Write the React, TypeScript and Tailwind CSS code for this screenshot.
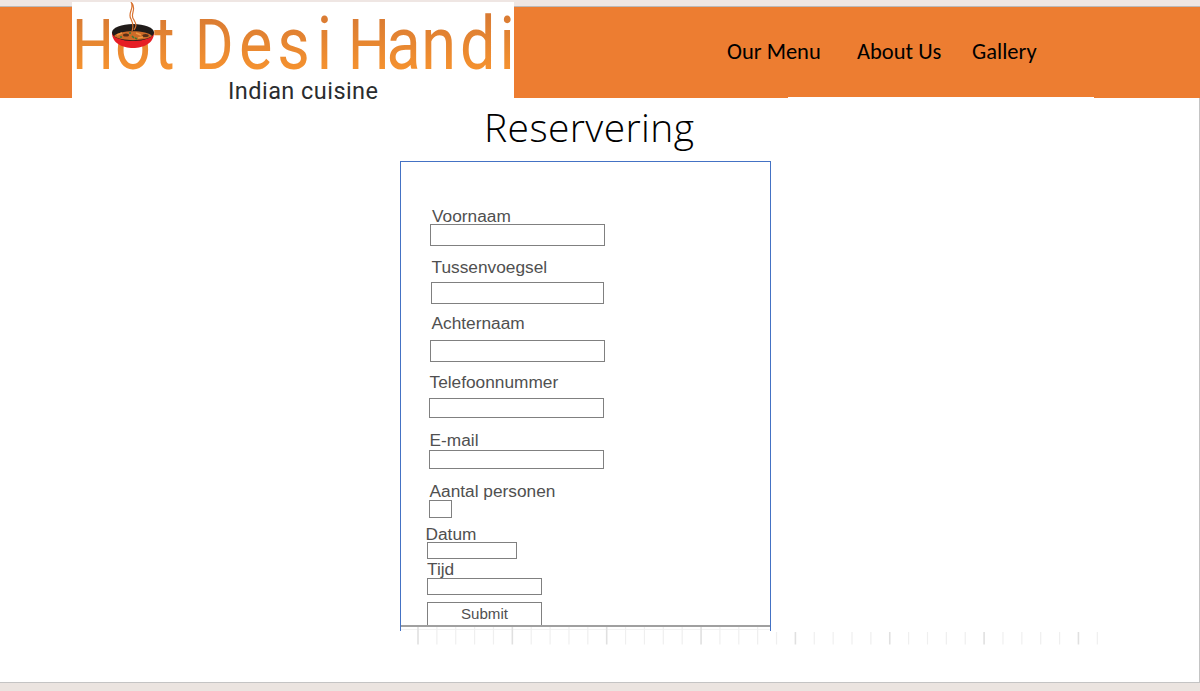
import React from "react";

type Field = { label: string; labelClass: string; boxClass: string };

const fields: Field[] = [
  { label: "Voornaam", labelClass: "mt-[46px] ml-[31px]", boxClass: "ml-[29px] h-[22px] w-[175px]" },
  { label: "Tussenvoegsel", labelClass: "mt-[13px] ml-[30.5px]", boxClass: "mt-[7px] ml-[30px] h-[22px] w-[173px]" },
  { label: "Achternaam", labelClass: "mt-[11px] ml-[30.5px]", boxClass: "mt-[9px] ml-[29px] h-[22px] w-[175px]" },
  { label: "Telefoonnummer", labelClass: "mt-[12px] ml-[28.5px]", boxClass: "mt-[8px] ml-[28px] h-[20px] w-[175px]" },
  { label: "E-mail", labelClass: "mt-[14px] ml-[28.5px]", boxClass: "mt-[2px] ml-[28px] h-[19px] w-[175px]" },
  { label: "Aantal personen", labelClass: "mt-[14px] ml-[28.5px]", boxClass: "mt-px ml-[28px] h-[18px] w-[23px]" },
  { label: "Datum", labelClass: "mt-[8px] ml-[24.5px]", boxClass: "ml-[26px] h-[17px] w-[90px]" },
  { label: "Tijd", labelClass: "mt-[2px] ml-[26px]", boxClass: "mt-px ml-[26px] h-[17px] w-[115px]" },
];

const ticks = Array.from({ length: 37 }, (_, i) => i);

function Logo() {
  return (
    <svg
      className="relative z-10 -mt-[5px] ml-[72px] h-[104px] w-[442px] shrink-0 bg-white"
      viewBox="72 2 442 104"
    >
      <defs>
        <linearGradient id="flame" x1="0" y1="16" x2="0" y2="70" gradientUnits="userSpaceOnUse">
          <stop offset="0" stopColor="#d97b33" />
          <stop offset="1" stopColor="#f5922f" />
        </linearGradient>
      </defs>
      <text
        transform="scale(0.84 1)"
        y="69"
        x="85.8 136.9 183.4 210 232.1 284.5 330 377 400 414.3 460 501.6 547.6 594.5"
        fontFamily="Roboto"
        fontSize="75"
        fill="url(#flame)"
      >
        <tspan fontSize="70">H</tspan>ot <tspan fontSize="70">D</tspan>esi <tspan fontSize="70">H</tspan>andi
      </text>
      <text x="228" y="98.500" textLength="150" fontFamily="Roboto" fontSize="23.5" fill="#2a2c2e">
        Indian cuisine
      </text>
      <path d="M112 33C112 53 154 53 154 33Z" fill="#e61d25" />
      <ellipse cx="133" cy="32.5" rx="21" ry="8.6" fill="#211c1a" />
      <path d="M114 36C118 29.500 148 29.500 152 36C146 41.500 120 41.500 114 36Z" fill="#cf6b28" />
      <ellipse cx="126" cy="35" rx="3" ry="1.6" fill="#573018" />
      <ellipse cx="145.500" cy="35.500" rx="3.2" ry="1.6" fill="#573018" />
      <path d="M120 37h2M132 36l2 2M135 38l2 1M129 33h2" stroke="#3b7b3b" strokeWidth="1.6" />
      <path d="M117 35l5-2M136 33l5 2M138 38l5-1" stroke="#ee9845" strokeWidth="1.4" />
      <path
        d="M131 2C135 8 127 13 131 19C133 23 134 26 132 31M132 3C137 10 129 15 134 20C137 25 136 27 134 30"
        fill="none"
        stroke="#d8722f"
        strokeWidth="1.2"
      />
    </svg>
  );
}

export default function App() {
  return (
    <div className="flex h-[691px] w-[1200px] flex-col overflow-hidden bg-[#ebe4e0] font-['Liberation_Sans',sans-serif]">
      <div className="h-[7px] shrink-0 border-b border-[#bdb9b8] bg-[#efe6e3]" />
      <header className="flex h-[91px] shrink-0 bg-[#ed7d31]">
        <Logo />
        <nav className="relative flex flex-1 font-['Carlito','Lato',sans-serif] text-[22.5px] leading-[26px] whitespace-nowrap text-black">
          <a className="mt-8 ml-[213px] w-[130px]">Our Menu</a>
          <a className="mt-8 w-[115px]">About Us</a>
          <a className="mt-8">Gallery</a>
          <span className="absolute bottom-0 left-[274px] h-px w-[306px] bg-white" />
        </nav>
      </header>
      <main className="flex h-[585px] shrink-0 flex-col border-r border-b border-[#c4c4c4] bg-white">
        <h1 className="mt-[2px] ml-[484px] h-[61px] font-['Open_Sans',sans-serif] text-[39px] leading-[54px] font-light tracking-[0.4px] text-black">
          Reservering
        </h1>
        <form className="relative ml-[400px] flex h-[470px] w-[371px] flex-col border-x border-t border-[#4472c4] text-[#505050]">
          {fields.map((f) => (
            <React.Fragment key={f.label}>
              <label className={`h-4 shrink-0 text-[17.3px] leading-4 whitespace-nowrap ${f.labelClass}`}>{f.label}</label>
              <div className={`shrink-0 border border-[#808080] ${f.boxClass}`} />
            </React.Fragment>
          ))}
          <button
            type="button"
            className="mt-[7px] ml-[26px] h-6 w-[115px] shrink-0 border border-b-0 border-[#808080] pb-[2px] text-[15.1px] leading-[21px]"
          >
            Submit
          </button>
          <div className="-mt-px h-[2px] shrink-0 bg-[#a0a0a0]" />
          <svg className="absolute top-[465px] -left-px h-[20px] w-[700px]" viewBox="0 0 700 20">
            <path d="M1 2.500H370" stroke="#f2f2f2" />
            {ticks.map((i) => {
              const x = 18 + i * 18.87;
              return (
                <line
                  key={i}
                  x1={x}
                  x2={x}
                  y1={x > 370 ? 5 : 0}
                  y2="17.5"
                  stroke={i % 5 === 0 ? "#e0e0e0" : "#efefef"}
                  strokeWidth={i % 5 === 0 ? 1.6 : 1.2}
                />
              );
            })}
          </svg>
        </form>
      </main>
    </div>
  );
}
